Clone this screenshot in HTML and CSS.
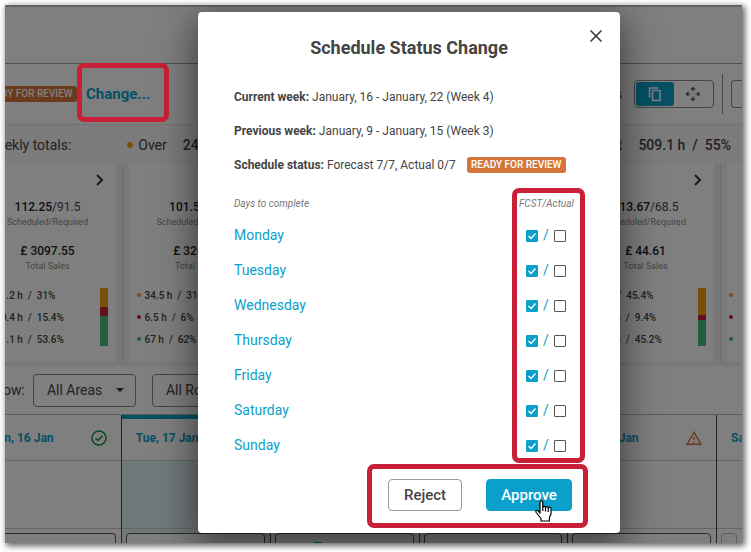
FILE: index.html
```html
<!DOCTYPE html>
<html lang="en">
<head>
  <meta charset="UTF-8" />
  <meta name="viewport" content="width=device-width, initial-scale=1" />
  <title>Schedule Status Change</title>
  <link rel="stylesheet" href="styles.css">
</head>
<body>

<div class="app">
  <header class="topbar"></header>

  <div class="toolbar">
    <div class="toolbar-left">
      <span class="badge">READY FOR REVIEW</span>
      <a class="change-link" href="#dialog">Change...</a>
    </div>
    <div class="toolbar-right">
      <span class="view-label">Shifts</span>
      <div class="toggle">
        <button type="button" class="toggle-btn active" aria-label="Copy">
          <svg width="14" height="16" viewBox="0 0 14 16" fill="none" stroke="#fff" stroke-width="1.500">
            <path d="M1.500 11.500V2h8.500" />
            <rect x="4.500" y="4.500" width="7.500" height="10" />
          </svg>
        </button>
        <button type="button" class="toggle-btn" aria-label="Move">
          <svg width="16" height="16" viewBox="0 0 16 16" fill="none" stroke="#555" stroke-width="1.2">
            <path d="M8 5.500V1.500M6 3.500 8 1.500 10 3.500M8 10.500v4M6 12.500 8 14.500 10 12.500M5.500 8H1.500M3.500 6 1.500 8 3.500 10M10.500 8h4M12.500 6 14.500 8 12.500 10" />
          </svg>
        </button>
      </div>
      <span class="divider"></span>
      <button type="button" class="more-btn" aria-label="More"></button>
    </div>
  </div>

  <div class="totals">
    <span class="totals-label">Weekly totals:</span>
    <span class="dot orange"></span>
    <span>Over</span>
    <b>246.3 h</b>
    <span class="totals-right">Cost<b>509.1 h&nbsp; /&nbsp; 55%</b></span>
  </div>

  <div class="cards">
    <div class="card">
      <div class="card-body">
        <svg class="chevron" width="8" height="12" viewBox="0 0 8 12"><path d="M1 1l5 5-5 5" /></svg>
        <p class="figure"><b>112.25</b>/91.5</p>
        <p class="caption">Scheduled/Required</p>
        <p class="figure sales"><b>£ 3097.55</b></p>
        <p class="caption">Total Sales</p>
        <div class="split">
          <ul>
            <li><span class="dot orange"></span>41.2 h&nbsp; /&nbsp; 31%</li>
            <li><span class="dot red"></span>20.4 h&nbsp; /&nbsp; 15.4%</li>
            <li><span class="dot green"></span>71.1 h&nbsp; /&nbsp; 53.6%</li>
          </ul>
          <div class="bar">
            <span class="orange" style="height: 32%"></span>
            <span class="red" style="height: 16%"></span>
            <span class="green" style="height: 52%"></span>
          </div>
        </div>
      </div>
    </div>
    <div class="card">
      <div class="card-body">
        <svg class="chevron" width="8" height="12" viewBox="0 0 8 12"><path d="M1 1l5 5-5 5" /></svg>
        <p class="figure"><b>101.5</b>/108</p>
        <p class="caption">Scheduled/Required</p>
        <p class="figure sales"><b>£ 3201.1</b></p>
        <p class="caption">Total Sales</p>
        <div class="split">
          <ul>
            <li><span class="dot orange"></span>34.5 h&nbsp; /&nbsp; 31.9%</li>
            <li><span class="dot red"></span>6.5 h&nbsp; /&nbsp; 6%</li>
            <li><span class="dot green"></span>67 h&nbsp; /&nbsp; 62%</li>
          </ul>
        </div>
      </div>
    </div>
    <div class="card"></div>
    <div class="card"></div>
    <div class="card">
      <div class="card-body">
        <svg class="chevron" width="8" height="12" viewBox="0 0 8 12"><path d="M1 1l5 5-5 5" /></svg>
        <p class="figure"><b>113.67</b>/68.5</p>
        <p class="caption">Scheduled/Required</p>
        <p class="figure sales"><b>£ 44.61</b></p>
        <p class="caption">Total Sales</p>
        <div class="split">
          <ul>
            <li><span class="dot orange"></span>62 h&nbsp; /&nbsp; 45.4%</li>
            <li><span class="dot red"></span>12.8 h&nbsp; /&nbsp; 9.4%</li>
            <li><span class="dot green"></span>61.8 h&nbsp; /&nbsp; 45.2%</li>
          </ul>
          <div class="bar">
            <span class="orange" style="height: 46%"></span>
            <span class="red" style="height: 10%"></span>
            <span class="green" style="height: 44%"></span>
          </div>
        </div>
      </div>
    </div>
    <div class="card last">
      <ul>
        <li><span class="dot orange"></span></li>
        <li><span class="dot red"></span></li>
        <li><span class="dot green"></span></li>
      </ul>
    </div>
  </div>

  <div class="filters">
    <label for="areas">Show:</label>
    <div class="select-wrap">
      <select id="areas"><option>All Areas</option></select>
      <span class="caret"></span>
    </div>
    <div class="select-wrap">
      <select id="roles" aria-label="Roles"><option>All Roles</option></select>
    </div>
  </div>

  <div class="days">
    <div class="day">
      <div class="day-head">
        <a href="#mon">Mon, 16 Jan</a>
        <svg width="16" height="16" viewBox="0 0 16 16" fill="none" stroke="#1d8a42" stroke-width="1.500">
          <circle cx="8" cy="8" r="7" />
          <path d="M4.500 8.200 7 10.500 11.500 5.800" />
        </svg>
      </div>
      <div class="day-body"></div>
      <div class="slot"><div class="shift"></div></div>
    </div>
    <div class="day today">
      <div class="day-head"><a href="#tue">Tue, 17 Jan</a></div>
      <div class="day-body"></div>
      <div class="slot"><div class="shift"></div></div>
    </div>
    <div class="day">
      <div class="day-head"></div>
      <div class="day-body"></div>
      <div class="slot"><div class="shift marked"></div></div>
    </div>
    <div class="day">
      <div class="day-head"></div>
      <div class="day-body"></div>
      <div class="slot"><div class="shift"></div></div>
    </div>
    <div class="day">
      <div class="day-head">
        <a href="#fri">Fri, 20 Jan</a>
        <svg width="16" height="14" viewBox="0 0 16 14" fill="none" stroke="#d9733a" stroke-width="1.400">
          <path d="M8 1.200 14.900 13.200H1.100Z" />
          <path d="M8 5.500v3.500M8 10.200v1.500" />
        </svg>
      </div>
      <div class="day-body"></div>
      <div class="slot"><div class="shift"></div></div>
    </div>
    <div class="day last">
      <div class="day-head"><a href="#sat">Sat, 21 Jan</a></div>
      <div class="day-body"></div>
      <div class="slot"><div class="shift muted"></div></div>
    </div>
  </div>

  <div class="backdrop"></div>
  <div class="mark mark-change"></div>

  <div class="dialog" id="dialog" role="dialog" aria-labelledby="dialogTitle">
    <button type="button" class="close" aria-label="Close">
      <svg width="12" height="12" viewBox="0 0 12 12" stroke="#333" stroke-width="1.500"><path d="M.5.5l11 11M11.500.5l-11 11" /></svg>
    </button>
    <h2 id="dialogTitle">Schedule Status Change</h2>
    <p class="info"><b>Current week:</b> January, 16 - January, 22 (Week 4)</p>
    <p class="info"><b>Previous week:</b> January, 9 - January, 15 (Week 3)</p>
    <p class="info"><b>Schedule status:</b> Forecast 7/7, Actual 0/7 <span class="badge">READY FOR REVIEW</span></p>

    <div class="table-wrap">
      <table>
        <thead>
          <tr><th>Days to complete</th><th class="checks">FCST/Actual</th></tr>
        </thead>
        <tbody>
          <tr><td>Monday</td><td class="checks"><input type="checkbox" aria-label="Monday forecast" checked><span>/</span><input type="checkbox" aria-label="Monday actual"></td></tr>
          <tr><td>Tuesday</td><td class="checks"><input type="checkbox" aria-label="Tuesday forecast" checked><span>/</span><input type="checkbox" aria-label="Tuesday actual"></td></tr>
          <tr><td>Wednesday</td><td class="checks"><input type="checkbox" aria-label="Wednesday forecast" checked><span>/</span><input type="checkbox" aria-label="Wednesday actual"></td></tr>
          <tr><td>Thursday</td><td class="checks"><input type="checkbox" aria-label="Thursday forecast" checked><span>/</span><input type="checkbox" aria-label="Thursday actual"></td></tr>
          <tr><td>Friday</td><td class="checks"><input type="checkbox" aria-label="Friday forecast" checked><span>/</span><input type="checkbox" aria-label="Friday actual"></td></tr>
          <tr><td>Saturday</td><td class="checks"><input type="checkbox" aria-label="Saturday forecast" checked><span>/</span><input type="checkbox" aria-label="Saturday actual"></td></tr>
          <tr><td>Sunday</td><td class="checks"><input type="checkbox" aria-label="Sunday forecast" checked><span>/</span><input type="checkbox" aria-label="Sunday actual"></td></tr>
        </tbody>
      </table>
      <div class="mark mark-checks"></div>
    </div>

    <div class="actions">
      <button type="button" class="btn">Reject</button>
      <button type="button" class="btn primary">Approve</button>
      <div class="mark mark-actions"></div>
      <svg class="pointer" width="17" height="22" viewBox="0 0 17 22" fill="#fff" stroke="#000" stroke-width="1.200" stroke-linejoin="round">
        <path d="M5 13V2.200a1.300 1.300 0 0 1 2.800 0V7.500a1.300 1.300 0 0 1 2.700.3 1.300 1.300 0 0 1 2.700.6 1.300 1.300 0 0 1 2.800 1V14l-1.600 3.500V21H6V18.500L1.200 12.500C.3 11 1.500 9.800 3 10.700Z" />
        <path d="M7.800 7.500V11M10.500 8V11.500M13.200 8.500V12" />
      </svg>
    </div>
  </div>
</div>

</body>
</html>
```

FILE: styles.css
```css
* {
  box-sizing: border-box;
}
body {
  font-family: Roboto, "Liberation Sans", sans-serif;
  margin: 0;
  padding: 5px 9px 9px 5px;
  background-color: #fff;
  color: #444;
}
p, h2, ul {
  margin: 0;
  padding: 0;
  list-style: none;
}
a {
  color: #0aa0cb;
  text-decoration: none;
}
b {
  font-weight: 500;
}
button, select {
  font-family: inherit;
  padding: 0;
}
.app {
  position: relative;
  display: flex;
  flex-direction: column;
  height: calc(100vh - 14px);
  overflow: hidden;
  white-space: nowrap;
}
body::before {
  content: "";
  position: absolute;
  inset: 5px 9px 9px 5px;
  box-shadow: 2px 2px 6px 1px rgba(0, 0, 0, 0.6);
}

/* header and toolbar */
.topbar {
  flex: 0 0 59px;
  border-top: 2px solid #c8c8c8;
  border-bottom: 1px solid #a0a0a0;
}
.toolbar {
  flex: 0 0 61px;
  display: flex;
  align-items: center;
  justify-content: space-between;
  border-bottom: 1px solid #e4e4e4;
}
.toolbar-left {
  display: flex;
  align-items: center;
  gap: 9px;
  margin-left: -27px;
}
.badge {
  display: inline-block;
  width: 99px;
  height: 16px;
  line-height: 16px;
  border-radius: 3px;
  background-color: #d4763b;
  color: #fff;
  font-size: 10px;
  font-weight: 500;
  text-align: center;
}
.change-link {
  font-size: 15px;
  font-weight: 700;
}
.toolbar-right {
  display: flex;
  align-items: center;
  height: 100%;
}
.view-label {
  margin-right: 12px;
  font-size: 14px;
}
.toggle {
  display: flex;
  height: 28px;
  padding: 1px;
  border: 1px solid #888;
  border-radius: 4px;
}
.toggle-btn {
  display: flex;
  align-items: center;
  justify-content: center;
  width: 38px;
  border: none;
  border-radius: 3px;
  background: none;
}
.toggle-btn.active {
  background-color: #0aa0cb;
}
.divider {
  width: 1px;
  height: 40px;
  margin: 0 8px;
  background-color: #888;
}
.more-btn {
  width: 11px;
  height: 28px;
  border: 1px solid #888;
  border-right: none;
  border-radius: 4px 0 0 4px;
  background: none;
}

/* weekly totals */
.totals {
  flex: 0 0 39px;
  display: flex;
  align-items: center;
  padding-right: 11px;
  background-color: #f8f8f8;
  font-size: 14px;
}
.totals-label {
  margin: 0 56px 0 -20px;
}
.totals b {
  margin-left: 16px;
}
.totals-right {
  margin-left: auto;
}
.dot {
  width: 6px;
  height: 6px;
  margin-right: 5px;
  border-radius: 50%;
}
.orange {
  background-color: #f39c12;
}
.red {
  background-color: #c82036;
}
.green {
  background-color: #45bf7d;
}

/* day cards */
.cards {
  flex: 0 0 202px;
  display: grid;
  grid-template-columns: 118px repeat(4, 1fr) 21px;
  padding-bottom: 4px;
  background-color: #f0f0f0;
}
.card {
  display: flex;
  justify-content: flex-end;
  overflow: hidden;
  border-right: 1px solid #d8d8d8;
  padding: 0 6px;
}
.card:first-child {
  padding-left: 0;
}
.card-body {
  flex: 0 0 137px;
  display: flex;
  flex-direction: column;
  padding: 10px 8px 0;
  background-color: #fff;
  text-align: center;
}
.chevron {
  align-self: flex-end;
  margin: 0 4px 13px 0;
  fill: none;
  stroke: #333;
  stroke-width: 2;
}
.figure {
  font-size: 12px;
  line-height: 16px;
}
.figure b {
  color: #222;
}
.figure.sales {
  margin-top: 14px;
}
.caption {
  font-size: 9px;
  line-height: 14px;
  color: #888;
}
.split {
  display: flex;
  justify-content: space-between;
  margin-top: 11px;
}
.card li {
  display: flex;
  align-items: center;
  height: 22px;
  font-size: 10px;
  font-weight: 500;
}
.card .dot {
  width: 4px;
  height: 4px;
  margin-right: 4px;
}
.bar {
  width: 8px;
  height: 58px;
  margin-top: 4px;
}
.bar span {
  display: block;
}
.card.last {
  justify-content: flex-start;
  border: none;
  padding: 120px 0 0 8px;
  background: linear-gradient(to right, #f0f0f0 6px, #fff 6px);
}

/* filters */
.filters {
  flex: 0 0 49px;
  display: flex;
  align-items: center;
  gap: 16px;
  border-bottom: 1px solid #bbb;
  font-size: 14px;
}
.filters label {
  margin: 0 -8px 0 -18px;
}
.select-wrap {
  position: relative;
}
.filters select {
  appearance: none;
  width: 103px;
  height: 33px;
  padding-left: 13px;
  border: 1px solid #888;
  border-radius: 4px;
  background-color: #fff;
  color: #444;
  font-size: 14px;
}
.caret {
  position: absolute;
  right: 12px;
  top: 14px;
  border: 4px solid transparent;
  border-top-color: #333;
}

/* week grid */
.days {
  flex: 1;
  display: grid;
  grid-template-columns: 117px repeat(4, 1fr) 25px;
}
.day {
  display: flex;
  flex-direction: column;
  min-width: 0;
  overflow: hidden;
  border-right: 1px solid #444;
}
.day.last {
  border-right: none;
}
.day-head {
  flex: 0 0 46px;
  align-self: flex-end;
  display: flex;
  align-items: center;
  justify-content: space-between;
  width: 148px;
  padding: 0 14px;
  border-bottom: 1px solid #ccc;
  font-size: 12px;
  font-weight: 700;
}
.day.last .day-head {
  align-self: flex-start;
}
.today .day-head {
  border-top: 4px solid #0aa0cb;
  padding-bottom: 4px;
}
.day-body {
  flex: 0 0 68px;
  border-bottom: 1px solid #ccc;
}
.today .day-body {
  background-color: #e0f0f5;
}
.slot {
  flex: 1;
  padding: 4px 5px 0 4px;
  overflow: hidden;
}
.today .slot {
  background-color: #e0f0f5;
}
.shift {
  height: 40px;
  border: 1px solid #555;
  border-radius: 4px;
  background-color: #fff;
}
.day:first-child .slot {
  padding-left: 0;
}
.day:first-child .shift {
  border-left: none;
  border-radius: 0 4px 0 0;
}
.shift.marked {
  background: linear-gradient(#0aa0cb, #0aa0cb) 38px 8px / 8px 4px no-repeat #fff;
}
.shift.muted {
  border-color: #bbb;
}

/* dialog */
.backdrop {
  position: absolute;
  inset: 0;
  background-color: rgba(0, 0, 0, 0.5);
}
.dialog {
  position: absolute;
  top: 7px;
  left: 193px;
  right: 122px;
  padding: 24px 36px 22px;
  border-radius: 4px;
  background-color: #fff;
  box-shadow: 0 10px 36px 4px rgba(0, 0, 0, 0.5);
}
.close {
  position: absolute;
  top: 16px;
  right: 16px;
  display: flex;
  padding: 2px;
  border: none;
  background: none;
}
.dialog h2 {
  margin-bottom: 21px;
  font-size: 18px;
  line-height: 23px;
  font-weight: 700;
  text-align: center;
}
.info {
  font-size: 12px;
  line-height: 34px;
}
.info b {
  font-weight: 700;
}
.info .badge {
  margin-left: 8px;
  vertical-align: 1px;
}
.table-wrap {
  position: relative;
}
table {
  width: 100%;
  margin-top: 10px;
  border-collapse: collapse;
}
th, td {
  padding: 0;
  text-align: left;
}
th {
  height: 25px;
  padding-bottom: 3px;
  font-size: 10px;
  font-weight: 400;
  font-style: italic;
  color: #777;
}
td {
  height: 35px;
  color: #0aa0cb;
  font-size: 14px;
}
th.checks {
  width: 65px;
}
td.checks {
  padding-left: 7px;
}
.checks input {
  appearance: none;
  width: 12px;
  height: 12px;
  margin: 0;
  border: 1px solid #555;
  border-radius: 1px;
  vertical-align: -2px;
}
.checks input:checked {
  border-color: #0aa0cb;
  background: url("data:image/svg+xml,%3Csvg xmlns='http://www.w3.org/2000/svg' viewBox='0 0 10 10'%3E%3Cpath d='M1.500 5 4 7.500 8.500 2.500' fill='none' stroke='white' stroke-width='1.300'/%3E%3C/svg%3E") #0aa0cb;
}
.checks span {
  margin: 0 5px;
}
.actions {
  position: relative;
  display: flex;
  justify-content: flex-end;
  gap: 24px;
  margin-top: 17px;
  padding-right: 12px;
}
.btn {
  width: 74px;
  height: 32px;
  border: 1px solid #999;
  border-radius: 4px;
  background-color: #fff;
  color: #444;
  font-size: 15px;
  font-weight: 500;
}
.btn.primary {
  width: 86px;
  border-color: #0aa0cb;
  background-color: #0aa0cb;
  color: #fff;
}
.pointer {
  position: absolute;
  right: 32px;
  top: 21px;
}

/* highlight frames */
.mark {
  position: absolute;
  border: 5px solid #c82036;
  border-radius: 7px;
  pointer-events: none;
}
.mark-change {
  top: 58px;
  left: 72px;
  width: 92px;
  height: 59px;
}
.mark-checks {
  inset: -4px -1px -1px auto;
  width: 73px;
}
.mark-actions {
  inset: -15px -4px -17px auto;
  width: 221px;
}
```
